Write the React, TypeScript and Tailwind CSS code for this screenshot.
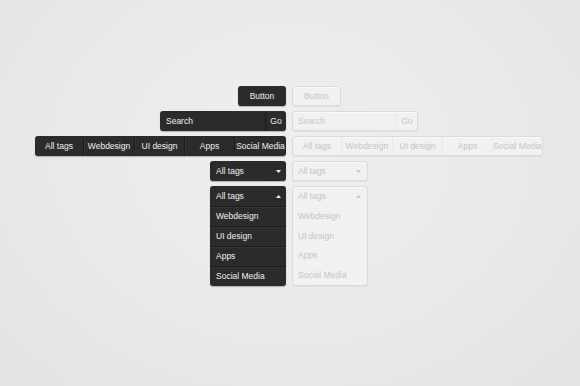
import React from 'react';

const tags = ['All tags', 'Webdesign', 'UI design', 'Apps', 'Social Media'];
const tagWidths = ['w-[48px]', 'w-[51px]', 'w-[50px]', 'w-[50px]', 'flex-1'];
const items = ['Webdesign', 'UI design', 'Apps', 'Social Media'];

const dark =
  'bg-[#2b2b2b] text-[#f2f2f2] rounded-[3px] shadow-[0_1px_1px_rgba(0,0,0,0.25)]';
const light =
  'bg-[#f1f1f1] text-[#c4c4c4] rounded-[3px] border border-[#dadada] shadow-[0_1px_1px_rgba(0,0,0,0.06),inset_0_1px_0_#fafafa]';

const Row: React.FC<{ left: React.ReactNode; right: React.ReactNode }> = ({ left, right }) => (
  <div className="flex gap-[6px]">
    <div className="w-[286px] flex justify-end">{left}</div>
    <div className="flex">{right}</div>
  </div>
);

const Caret: React.FC<{ up?: boolean; color: string }> = ({ up, color }) => (
  <svg width="5" height="3" viewBox="0 0 5 3" className="shrink-0">
    <path d={up ? 'M0 3 L2.5 0 L5 3 Z' : 'M0 0 L5 0 L2.5 3 Z'} fill={color} />
  </svg>
);

const App: React.FC = () => {
  return (
    <div
      className="w-[580px] h-[386px] overflow-hidden pt-[86px] flex flex-col gap-[5px] text-[8.5px] whitespace-nowrap font-['Liberation_Sans',Arial,sans-serif] bg-[radial-gradient(ellipse_at_50%_40%,#efefef_0%,#e9e9e9_55%,#e2e2e2_100%)]"
    >
      {/* Buttons */}
      <Row
        left={<div className={`${dark} w-[48px] h-[20px] flex items-center justify-center`}>Button</div>}
        right={<div className={`${light} w-[49px] h-[20px] flex items-center justify-center`}>Button</div>}
      />

      {/* Search */}
      <Row
        left={
          <div className={`${dark} w-[126px] h-[20px] flex`}>
            <div className="flex-1 flex items-center pl-[6px]">Search</div>
            <div className="w-[21px] flex items-center justify-center border-l border-[#1c1c1c]">Go</div>
          </div>
        }
        right={
          <div className={`${light} w-[126px] h-[20px] flex`}>
            <div className="flex-1 flex items-center pl-[5px]">Search</div>
            <div className="w-[21px] flex items-center justify-center border-l border-[#e8e8e8]">Go</div>
          </div>
        }
      />

      {/* Tag bar */}
      <Row
        left={
          <div className={`${dark} w-[251px] h-[20px] flex`}>
            {tags.map((t, i) => (
              <div
                key={t}
                className={`${tagWidths[i]} shrink-0 flex items-center justify-center ${i > 0 ? 'border-l border-[#1c1c1c] shadow-[inset_1px_0_0_#353535]' : ''}`}
              >
                {t}
              </div>
            ))}
          </div>
        }
        right={
          <div className={`${light} w-[251px] h-[20px] flex`}>
            {tags.map((t, i) => (
              <div
                key={t}
                className={`${tagWidths[i]} shrink-0 flex items-center justify-center ${i > 0 ? 'border-l border-[#e9e9e9]' : ''}`}
              >
                {t}
              </div>
            ))}
          </div>
        }
      />

      {/* Select closed */}
      <Row
        left={
          <div className={`${dark} w-[76px] h-[20px] flex items-center justify-between pl-[6px] pr-[5px]`}>
            <span>All tags</span>
            <Caret color="#f2f2f2" />
          </div>
        }
        right={
          <div className={`${light} w-[76px] h-[20px] flex items-center justify-between pl-[5px] pr-[6px]`}>
            <span>All tags</span>
            <Caret color="#c4c4c4" />
          </div>
        }
      />

      {/* Select open */}
      <Row
        left={
          <div className={`${dark} w-[76px] h-[100px] flex flex-col`}>
            <div className="h-[20px] flex items-center justify-between pl-[6px] pr-[5px]">
              <span>All tags</span>
              <Caret up color="#f2f2f2" />
            </div>
            {items.map((t) => (
              <div
                key={t}
                className="h-[20px] flex items-center pl-[6px] border-t border-[#1a1a1a] shadow-[inset_0_1px_0_#353535]"
              >
                {t}
              </div>
            ))}
          </div>
        }
        right={
          <div className={`${light} w-[76px] h-[100px] flex flex-col`}>
            <div className="h-[20px] flex items-center justify-between pl-[5px] pr-[6px]">
              <span>All tags</span>
              <Caret up color="#c4c4c4" />
            </div>
            {items.map((t) => (
              <div key={t} className="h-[20px] flex items-center pl-[5px]">
                {t}
              </div>
            ))}
          </div>
        }
      />
    </div>
  );
};

export default App;
